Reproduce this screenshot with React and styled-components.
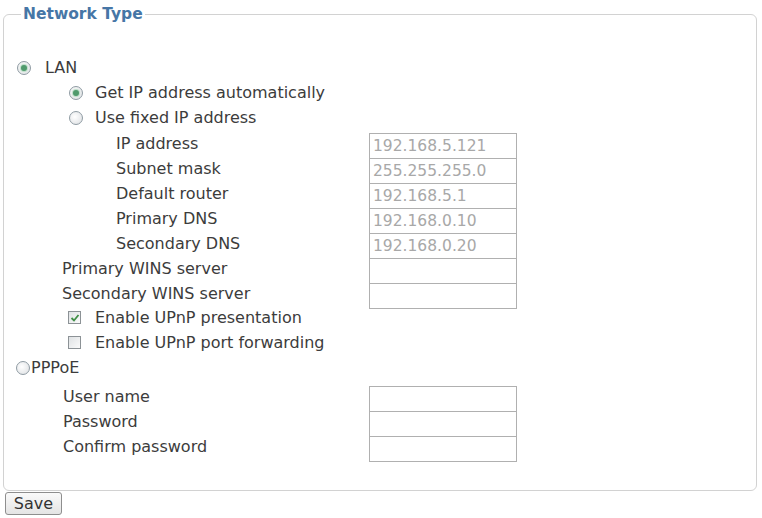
import styled, { createGlobalStyle } from 'styled-components';

const GlobalStyle = createGlobalStyle`
	html, body {
		margin: 0;
		padding: 0;
		background: #fff;
	}
	body {
		font-family: "DejaVu Sans", Verdana, sans-serif;
		color: #3c3c3c;
	}
`

const Page = styled.div`
	width: 762px;
	height: 518px;
	box-sizing: border-box;
	padding: 4px 5px 0 3px;
	overflow: hidden;
`

const Fieldset = styled.fieldset`
	margin: 0;
	padding: 34px 0 29px 0;
	border: 1px solid #d2d2d2;
	border-radius: 6px;
	min-width: 0;
`

const Legend = styled.legend`
	margin-left: 17px;
	padding: 0 2px;
	font-size: 15.5px;
	line-height: 20px;
	font-weight: bold;
	color: #4676a6;
`

const Row = styled.div`
	display: grid;
	grid-template-columns: 365px 148px;
	height: 25px;
	margin-top: ${p => p.$gap || 0}px;
`

const Label = styled.label`
	display: flex;
	align-items: center;
	gap: ${p => p.$gap ?? 12}px;
	padding-left: ${p => p.$indent}px;
	padding-bottom: 6px;
	font-size: 16px;
	letter-spacing: 0;
	white-space: nowrap;
`

const Radio = styled.span`
	position: relative;
	flex: none;
	width: 12px;
	height: 12px;
	border-radius: 50%;
	border: 1px solid #8f9ba3;
	background: radial-gradient(circle at 40% 40%, #fff 0%, #e6e8ea 70%, #d4d8dc 100%);
	&::after {
		content: '';
		display: ${p => (p.$on ? 'block' : 'none')};
		position: absolute;
		left: 3px;
		top: 3px;
		width: 6px;
		height: 6px;
		border-radius: 50%;
		background: #4f9a6c;
		box-shadow: 0 0 1px 1px #b9dcc6;
	}
`

const Box = styled.span`
	flex: none;
	width: 11px;
	height: 11px;
	border: 1px solid #8c9296;
	background: linear-gradient(135deg, #dfe2e4, #fafafa);
	display: flex;
	align-items: center;
	justify-content: center;
`

const Field = styled.input`
	box-sizing: border-box;
	width: 148px;
	height: 26px;
	margin: 0;
	padding: 0 0 0 3px;
	border: 1px solid #b0b0b0;
	background: #fff;
	font-family: "DejaVu Sans", Verdana, sans-serif;
	font-size: 15.5px;
	color: #a8a8a8;
	outline: none;
`

const SaveButton = styled.button`
	margin: 1px 0 0 2px;
	width: 57px;
	height: 23px;
	padding: 0;
	border: 1px solid #8e8e8e;
	border-radius: 3px;
	background: linear-gradient(#fafafa, #e4e4e4);
	font-family: "DejaVu Sans", Verdana, sans-serif;
	font-size: 16px;
	color: #333;
`

const Check = () => (
	<svg width="10" height="10" viewBox="0 0 10 10">
		<polyline points="1.5,5 4,7.5 8.5,2" fill="none" stroke="#3f8f46" strokeWidth="1.8" />
	</svg>
)

const staticFields = [
	['IP address', '192.168.5.121'],
	['Subnet mask', '255.255.255.0'],
	['Default router', '192.168.5.1'],
	['Primary DNS', '192.168.0.10'],
	['Secondary DNS', '192.168.0.20'],
]

const App = () => (
	<Page>
		<GlobalStyle />
		<Fieldset>
			<Legend>Network Type</Legend>

			<Row>
				<Label $indent={13} $gap={14}><Radio $on />LAN</Label>
			</Row>
			<Row>
				<Label $indent={65}><Radio $on />Get IP address automatically</Label>
			</Row>
			<Row>
				<Label $indent={65}><Radio />Use fixed IP address</Label>
			</Row>
			{staticFields.map(([label, value]) => (
				<Row key={label}>
					<Label $indent={112}>{label}</Label>
					<Field value={value} readOnly />
				</Row>
			))}
			<Row>
				<Label $indent={58}>Primary WINS server</Label>
				<Field defaultValue="" />
			</Row>
			<Row>
				<Label $indent={58}>Secondary WINS server</Label>
				<Field defaultValue="" />
			</Row>
			<Row>
				<Label $indent={64} $gap={14}><Box><Check /></Box>Enable UPnP presentation</Label>
			</Row>
			<Row>
				<Label $indent={64} $gap={14}><Box />Enable UPnP port forwarding</Label>
			</Row>
			<Row>
				<Label $indent={12} $gap={1}><Radio />PPPoE</Label>
			</Row>
			<Row $gap={3}>
				<Label $indent={59}>User name</Label>
				<Field defaultValue="" />
			</Row>
			<Row>
				<Label $indent={59}>Password</Label>
				<Field type="password" defaultValue="" />
			</Row>
			<Row>
				<Label $indent={59}>Confirm password</Label>
				<Field type="password" defaultValue="" />
			</Row>
		</Fieldset>
		<SaveButton>Save</SaveButton>
	</Page>
)

export default App;
